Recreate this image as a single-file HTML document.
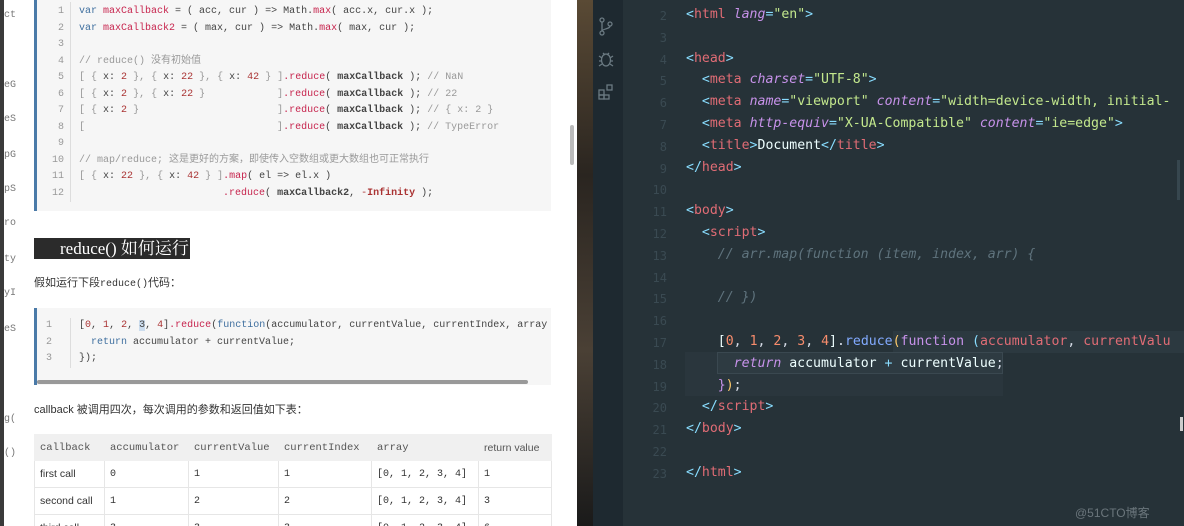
<!DOCTYPE html>
<html><head><meta charset="utf-8"><style>
*{margin:0;padding:0;box-sizing:border-box}
html,body{width:1184px;height:526px;overflow:hidden}
body{position:relative;background:#222;font-family:"Liberation Sans","Noto Sans CJK SC",sans-serif}
.abs{position:absolute}
#left{left:0;top:0;width:577px;height:526px;background:#fff;overflow:hidden}
#strip{left:0;top:0;width:4px;height:526px;background:#3a3a3a}
.frag{position:absolute;left:4px;font:10px "Liberation Mono",monospace;color:#777}
.cb{position:absolute;background:#f6f6f6;border-left:3px solid #4a7aa8}
.ln{position:absolute;width:22px;text-align:right;font:10px "Liberation Mono",monospace;color:#999}
.cl{position:absolute;font:10px "Liberation Mono","Noto Sans CJK SC",monospace;color:#444;white-space:pre}
.k{color:#3f6f9f}.r{color:#c7254e}.c{color:#999}.n{color:#a33}
.sep{position:absolute;width:1px;background:#ddd}
table{border-collapse:collapse;font-size:10.5px;color:#333;table-layout:fixed;white-space:nowrap}
td{border:1px solid #e6e6e6;padding:0 5px;height:27px;overflow:hidden}
th{background:#f0f0f0;font-weight:normal;text-align:left;padding:0 5px;height:26px;font-family:"Liberation Mono",monospace;color:#555;border:1px solid #f0f0f0;overflow:hidden}
.m{font-family:"Liberation Mono",monospace;font-size:10px}
#photo{left:577px;top:0;width:16px;height:526px;background:linear-gradient(#5a4a35,#2a2520,#4a4035,#1a1a1a)}
#act{left:593px;top:0;width:30px;height:526px;background:#1e2930}
#ed{left:623px;top:0;width:561px;height:526px;background:#263238;overflow:hidden}
.el{position:absolute;left:0;font:13.2px "DejaVu Sans Mono","Liberation Mono",monospace;white-space:pre;color:#d8dee9}
.en{position:absolute;left:20px;width:24px;text-align:right;font:12px "DejaVu Sans Mono",monospace;color:#3a4a52}
.t{color:#e06c75}.a{color:#c792ea;font-style:italic}.s{color:#c3e88d}.p{color:#89ddff}.cm{color:#5f737d;font-style:italic}.o{color:#f78c6c}.f{color:#82aaff}.y{color:#ffcb6b}.w{color:#eeffff}
</style></head><body>
<div id="left" class="abs">
<div id="strip" class="abs"></div>
<div class="frag" style="top:10px">ct</div><div class="frag" style="top:80px">eG</div><div class="frag" style="top:114px">eS</div><div class="frag" style="top:150px">pG</div><div class="frag" style="top:184px">pS</div><div class="frag" style="top:218px">ro</div><div class="frag" style="top:254px">ty</div><div class="frag" style="top:288px">yI</div><div class="frag" style="top:324px">eS</div><div class="frag" style="top:414px">g(</div><div class="frag" style="top:448px">()</div>

<div class="cb" style="left:34px;top:0;width:517px;height:211px"></div>
<div class="sep" style="left:70px;top:2px;height:200px"></div>
<div class="ln" style="left:42px;top:4px;line-height:16.5px">1<br>2<br>3<br>4<br>5<br>6<br>7<br>8<br>9<br>10<br>11<br>12</div>
<div class="cl" style="left:79px;top:4px;line-height:16.5px"><span class="k">var</span> <span class="r">maxCallback</span> = ( acc, cur ) => Math.<span class="r">max</span>( acc.x, cur.x );
<span class="k">var</span> <span class="r">maxCallback2</span> = ( max, cur ) => Math.<span class="r">max</span>( max, cur );

<span class="c">// reduce() 没有初始值</span>
<span class="c">[ {</span> x: <span class="n">2</span> <span class="c">}, {</span> x: <span class="n">22</span> <span class="c">}, {</span> x: <span class="n">42</span> <span class="c">} ]</span><span class="r">.reduce</span>( <b>maxCallback</b> ); <span class="c">// NaN</span>
<span class="c">[ {</span> x: <span class="n">2</span> <span class="c">}, {</span> x: <span class="n">22</span> <span class="c">}</span>            <span class="c">]</span><span class="r">.reduce</span>( <b>maxCallback</b> ); <span class="c">// 22</span>
<span class="c">[ {</span> x: <span class="n">2</span> <span class="c">}</span>                       <span class="c">]</span><span class="r">.reduce</span>( <b>maxCallback</b> ); <span class="c">// { x: 2 }</span>
<span class="c">[</span>                                <span class="c">]</span><span class="r">.reduce</span>( <b>maxCallback</b> ); <span class="c">// TypeError</span>

<span class="c">// map/reduce; 这是更好的方案，即使传入空数组或更大数组也可正常执行</span>
<span class="c">[ {</span> x: <span class="n">22</span> <span class="c">}, {</span> x: <span class="n">42</span> <span class="c">} ]</span><span class="r">.map</span>( el => el.x )
                        <span class="r">.reduce</span>( <b>maxCallback2</b>, <span class="n">-<b>Infinity</b></span> );</div>

<div class="abs" style="left:34px;top:238px;width:156px;height:21px;background:#2b2b2b;color:#fff;font:17px 'Liberation Serif','Noto Serif CJK SC',serif;padding-left:26px;line-height:21px;white-space:nowrap">reduce() 如何运行</div>
<div class="abs" style="left:34px;top:274px;font-size:11px;color:#333">假如运行下段<span class="m">reduce()</span>代码：</div>

<div class="cb" style="left:34px;top:308px;width:517px;height:77px"></div>
<div class="abs" style="left:37px;top:380px;width:491px;height:4px;background:#999;border-radius:2px"></div>
<div class="sep" style="left:70px;top:318px;height:50px"></div>
<div class="ln" style="left:30px;top:318px;line-height:16.5px">1<br>2<br>3</div>
<div class="cl" style="left:79px;top:318px;line-height:16.5px">[<span class="n">0</span>, <span class="n">1</span>, <span class="n">2</span>, <span style="background:#cde">3</span>, <span class="n">4</span>]<span class="r">.reduce</span>(<span class="k">function</span>(accumulator, currentValue, currentIndex, array
  <span class="k">return</span> accumulator + currentValue;
});</div>

<div class="abs" style="left:34px;top:401px;font-size:11px;color:#333">callback 被调用四次，每次调用的参数和返回值如下表：</div>
<table class="abs" style="left:34px;top:434px;width:517px">
<colgroup><col style="width:70px"><col style="width:84px"><col style="width:90px"><col style="width:93px"><col style="width:107px"><col style="width:73px"></colgroup>
<tr><th>callback</th><th>accumulator</th><th>currentValue</th><th>currentIndex</th><th>array</th><th style="font-family:'Liberation Sans';">return value</th></tr>
<tr><td>first call</td><td class="m">0</td><td class="m">1</td><td class="m">1</td><td class="m">[0, 1, 2, 3, 4]</td><td class="m">1</td></tr>
<tr><td>second call</td><td class="m">1</td><td class="m">2</td><td class="m">2</td><td class="m">[0, 1, 2, 3, 4]</td><td class="m">3</td></tr>
<tr><td>third call</td><td class="m">3</td><td class="m">3</td><td class="m">3</td><td class="m">[0, 1, 2, 3, 4]</td><td class="m">6</td></tr>
</table>
<div class="abs" style="left:570px;top:125px;width:4px;height:40px;background:#bbb;border-radius:2px"></div>
</div>
<div id="photo" class="abs"></div>
<div id="act" class="abs">
<svg class="abs" style="left:5px;top:17px" width="16" height="20" viewBox="0 0 16 20" fill="none" stroke="#6b7a82" stroke-width="1.3"><circle cx="4" cy="3" r="2"/><circle cx="4" cy="16" r="2"/><circle cx="12" cy="7" r="2"/><path d="M4 5v9M12 9c0 3-8 3-8 5"/></svg>
<svg class="abs" style="left:5px;top:50px" width="16" height="18" viewBox="0 0 16 18" fill="none" stroke="#6b7a82" stroke-width="1.3"><ellipse cx="8" cy="10" rx="4.5" ry="6"/><path d="M1 6l3 2M15 6l-3 2M1 11h3M15 11h-3M1 16l3-2M15 16l-3-2M5 3l2 2M11 3l-2 2"/></svg>
<svg class="abs" style="left:5px;top:84px" width="16" height="16" viewBox="0 0 16 16" fill="none" stroke="#6b7a82" stroke-width="1.3"><rect x="1" y="6" width="5" height="5"/><rect x="1" y="11" width="5" height="4"/><rect x="6" y="11" width="5" height="4"/><rect x="9" y="1" width="5" height="5"/></svg>
</div>
<div id="ed" class="abs">
<div class="en" style="top:6px;line-height:21.8px">2<br>3<br>4<br>5<br>6<br>7<br>8<br>9<br>10<br>11<br>12<br>13<br>14<br>15<br>16<br>17<br>18<br>19<br>20<br>21<br>22<br>23</div>
<div class="abs" style="left:270px;top:331px;width:291px;height:22px;background:#2c3940"></div>
<div class="abs" style="left:62px;top:352px;width:318px;height:44px;background:#2a363d"></div>
<div class="abs" style="left:94px;top:352px;width:286px;height:22px;background:#2e3b42;border:1px solid #3a4850"></div>
<div class="el" style="left:63px;top:4px;line-height:21.8px"><span class="p">&lt;</span><span class="t">html</span> <span class="a">lang</span><span class="p">=</span><span class="s">"en"</span><span class="p">&gt;</span>

<span class="p">&lt;</span><span class="t">head</span><span class="p">&gt;</span>
  <span class="p">&lt;</span><span class="t">meta</span> <span class="a">charset</span><span class="p">=</span><span class="s">"UTF-8"</span><span class="p">&gt;</span>
  <span class="p">&lt;</span><span class="t">meta</span> <span class="a">name</span><span class="p">=</span><span class="s">"viewport"</span> <span class="a">content</span><span class="p">=</span><span class="s">"width=device-width, initial-</span>
  <span class="p">&lt;</span><span class="t">meta</span> <span class="a">http-equiv</span><span class="p">=</span><span class="s">"X-UA-Compatible"</span> <span class="a">content</span><span class="p">=</span><span class="s">"ie=edge"</span><span class="p">&gt;</span>
  <span class="p">&lt;</span><span class="t">title</span><span class="p">&gt;</span><span class="w">Document</span><span class="p">&lt;/</span><span class="t">title</span><span class="p">&gt;</span>
<span class="p">&lt;/</span><span class="t">head</span><span class="p">&gt;</span>

<span class="p">&lt;</span><span class="t">body</span><span class="p">&gt;</span>
  <span class="p">&lt;</span><span class="t">script</span><span class="p">&gt;</span>
    <span class="cm">// arr.map(function (item, index, arr) {</span>

    <span class="cm">// })</span>

    <span class="w">[</span><span class="o">0</span>, <span class="o">1</span>, <span class="o">2</span>, <span class="o">3</span>, <span class="o">4</span><span class="w">]</span>.<span class="f">reduce</span><span class="y">(</span><span class="a" style="font-style:normal;color:#c792ea">function</span> <span class="p">(</span><span class="t">accumulator</span>, <span class="t">currentValu</span>
      <span class="a" style="color:#c792ea">return</span> <span class="w">accumulator</span> <span class="p">+</span> <span class="w">currentValue</span>;
    <span class="a" style="font-style:normal">}</span><span class="y">)</span>;
  <span class="p">&lt;/</span><span class="t">script</span><span class="p">&gt;</span>
<span class="p">&lt;/</span><span class="t">body</span><span class="p">&gt;</span>

<span class="p">&lt;/</span><span class="t">html</span><span class="p">&gt;</span></div>
<div class="abs" style="left:554px;top:160px;width:3px;height:40px;background:#37474f"></div>
<div class="abs" style="left:557px;top:417px;width:3px;height:14px;background:#ccc"></div>
<div class="abs" style="left:452px;top:504px;font-size:12px;color:#6b767c">@51CTO博客</div>
</div>
</body></html>
